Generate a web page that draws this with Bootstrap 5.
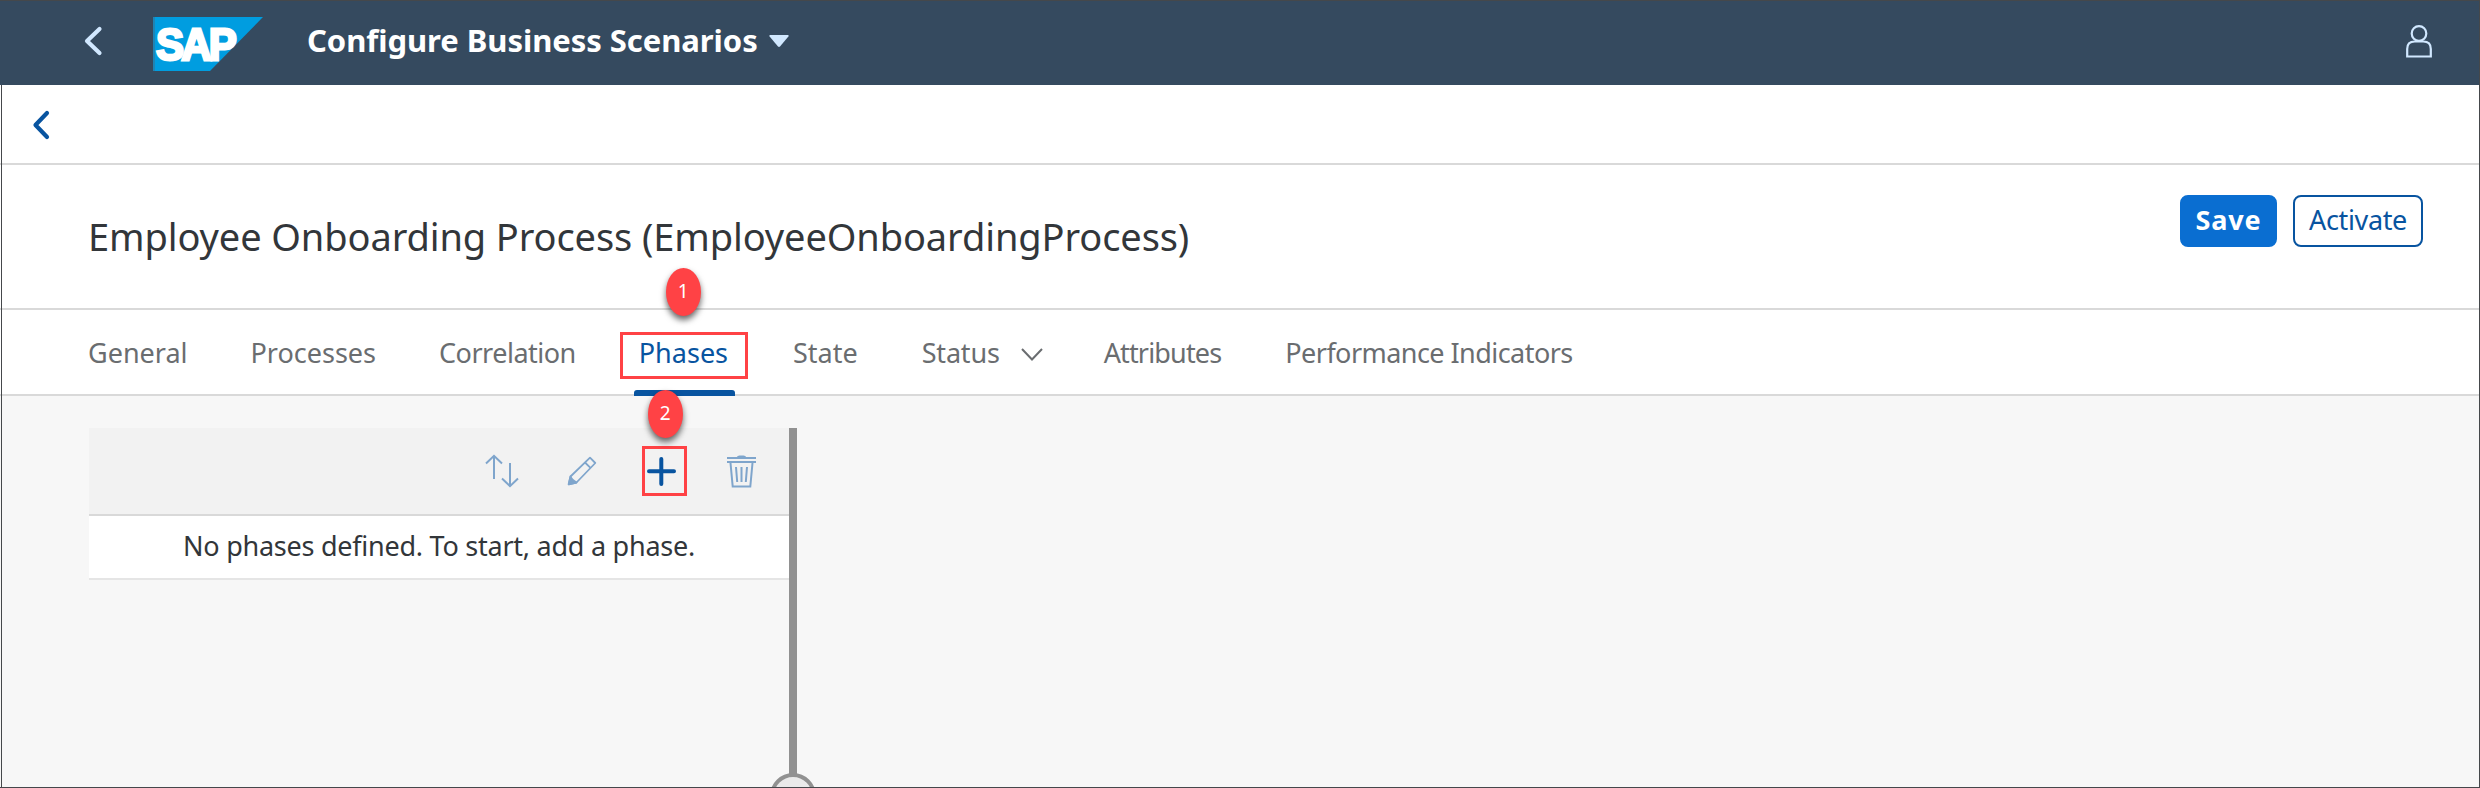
<!DOCTYPE html>
<html lang="en">
<head>
<meta charset="utf-8">
<meta name="viewport" content="width=device-width, initial-scale=1">
<title>Configure Business Scenarios</title>
<link href="https://cdn.jsdelivr.net/npm/bootstrap@5.3.0/dist/css/bootstrap.min.css" rel="stylesheet">
<style>
  body { font-family: "Noto Sans", sans-serif; font-size: 27px; line-height: 36px; color: #32363a; background: #f7f7f7; }
  .app-frame { height: 788px; border: 1px solid #45484b; border-width: 0 1px 1px 0; }
  .app-frame > .frame-left { top: 85px; bottom: 0; left: 1px; width: 1px; background: #45484b; z-index: 5; }
  svg { display: block; flex: none; }
  .shell { height: 85px; margin-right: -1px; background: #354a5f; border-top: 1px solid #45484b; padding: 0 48px 4px 83px; }
  .shell-title { font-size: 31px; font-weight: 700; color: #fff; letter-spacing: -.05px; margin: -2px 0 0 44px; }
  .back-row { height: 80px; border-bottom: 2px solid #d9d9d9; padding: 2px 0 0 32px; }
  .title-row { height: 145px; border-bottom: 2px solid #d9d9d9; padding: 0 56px 0 88px; }
  .page-title { font-size: 38px; font-weight: 400; letter-spacing: -.1px; line-height: 48px; color: #32363a; padding-bottom: 2px; }
  .action { height: 52px; margin-top: 30px; padding: 0 0 3px; border-width: 2px; border-radius: 8px; font-size: 27px; line-height: 44px; }
  .action-save { width: 97px; background: #0a6ed1; border-color: #0a6ed1; color: #fff; font-weight: 700; letter-spacing: .8px; }
  .action-activate { width: 130px; background: #fff; border-color: #0854a0; color: #0854a0; letter-spacing: -.35px; }
  .tab-row { height: 86px; border-bottom: 2px solid #d9d9d9; padding-left: 88px; gap: 64px; flex-wrap: nowrap; }
  .tab-row .nav-link { padding: 2px 0 0; color: #6a6d70; height: 84px; display: flex; align-items: center; position: relative; white-space: nowrap; }
  .tab-row .nav-link.active { color: #0854a0; }
  .tab-row .nav-link.active::after { content: ""; position: absolute; left: -5px; width: 101px; bottom: -2px; height: 6px; background: #0854a0; border-radius: 3px 3px 0 0; }
  .work { height: 391px; padding: 32px 0 0 89px; }
  .phases { width: 700px; }
  .phase-tools { height: 88px; background: #f2f2f2; border-bottom: 2px solid #d9d9d9; padding-right: 33px; }
  .phase-empty { height: 64px; background: #fff; border-bottom: 2px solid #e5e5e5; padding: 0 0 2px; letter-spacing: -.25px; }
  .splitter { width: 8px; background: #919191; }
  .grip { left: -19px; top: 345px; width: 46px; height: 46px; border: 4px solid #919191; border-radius: 50%; background: #eaeaea; }
  .callout-box { border: 3px solid #ff4245; pointer-events: none; z-index: 2; }
  .callout-dot { width: 35px; height: 48px; border-radius: 50%; background: #ff4245; color: #fff; font-size: 19px; line-height: 46px; text-align: center; letter-spacing: 0; box-shadow: 0 4px 6px rgba(0,0,0,.6); z-index: 3; }
</style>
</head>
<body>
<div class="app-frame position-relative overflow-hidden">
  <div class="frame-left position-absolute"></div>

  <header class="shell d-flex align-items-center">
    <svg width="20" height="30" viewBox="0 0 20 30" fill="none" stroke="#d1e8ff" stroke-width="4.2" stroke-linecap="round" stroke-linejoin="round"><path d="M16.500 3 4 15l12.500 12"/></svg>
    <svg width="110" height="54" viewBox="0 0 110 54" style="margin:6px 0 0 50px" role="img" aria-label="SAP">
      <path d="M0 0h110L57 54H0z" fill="#009de0"/><path d="M0 0h2v54H0z" fill="#1f84b4"/>
      <text x="3" y="42.500" textLength="78" lengthAdjust="spacingAndGlyphs" font-family="Liberation Sans, sans-serif" font-size="45" font-weight="700" letter-spacing="-3" fill="#fff" stroke="#fff" stroke-width="2.800">SAP</text>
    </svg>
    <span class="shell-title">Configure Business Scenarios</span>
    <svg width="20" height="12" viewBox="0 0 20 12" style="margin-left:11px"><path d="M1 0h18q1 .5.4 1.400L11 11.500q-1 .8-2 0L.6 1.400Q0 .5 1 0z" fill="#d1e8ff"/></svg>
    <svg class="ms-auto" width="26" height="33" viewBox="0 0 26 33" fill="none" stroke="#d1e8ff" stroke-width="2.200"><circle cx="13" cy="8.500" r="7.300"/><path d="M1.200 31.500V24q0-7.500 7.500-7.500h8.600q7.500 0 7.500 7.500v7.500z"/></svg>
  </header>

  <div class="back-row bg-white d-flex align-items-center">
    <svg width="18" height="30" viewBox="0 0 18 30" fill="none" stroke="#0854a0" stroke-width="4.200" stroke-linecap="round" stroke-linejoin="round"><path d="M15 3 3.500 15 15 27"/></svg>
  </div>

  <div class="title-row bg-white d-flex align-items-center">
    <h1 class="page-title mb-0">Employee Onboarding Process (EmployeeOnboardingProcess)</h1>
    <div class="ms-auto d-flex gap-3 align-self-start">
      <button class="btn action action-save">Save</button>
      <button class="btn action action-activate">Activate</button>
    </div>
  </div>

  <nav class="nav tab-row bg-white position-relative">
    <a class="nav-link">General</a>
    <a class="nav-link" style="margin-left:-1px">Processes</a>
    <a class="nav-link" style="letter-spacing:-.5px;margin-left:-1px">Correlation</a>
    <a class="nav-link active" style="margin-left:-1px">Phases
      <span class="callout-box position-absolute" style="left:-19px;top:22px;width:128px;height:47px"></span>
      <span class="callout-dot position-absolute" style="left:27px;top:-42px">1</span>
      <span class="callout-dot position-absolute" style="left:9px;top:80px">2</span>
    </a>
    <a class="nav-link" style="margin-left:1px">State</a>
    <a class="nav-link" style="letter-spacing:-.2px">Status
      <svg width="22" height="13" viewBox="0 0 22 13" style="margin:3px 0 0 21px" fill="none" stroke="#6a6d70" stroke-width="2"><path d="m1 1 10 10.500L21 1"/></svg>
    </a>
    <a class="nav-link" style="letter-spacing:-.84px;margin-left:-3px">Attributes</a>
    <a class="nav-link" style="letter-spacing:-.55px">Performance Indicators</a>
  </nav>

  <main class="work d-flex">
    <section class="phases">
      <div class="phase-tools d-flex align-items-center justify-content-end">
        <svg width="34" height="34" viewBox="0 0 34 34" fill="none" stroke="#7fa5cc" stroke-width="2"><path d="M9 25V2M1 9.500 9 1.800l8 7.700M25 9v23M17 24.500l8 7.700 8-7.700"/></svg>
        <svg width="30" height="30" viewBox="0 0 30 30" style="margin-left:48px" fill="none" stroke="#7fa5cc" stroke-width="1.800" stroke-linejoin="round"><path d="M3.500 20.500 23 1.700 28.300 7 9.500 26.500 1.700 28.300zM18 6.500l5.500 5.300"/><path d="M3.500 20.500q1 3 6 6l-7.800 1.800z" fill="#7fa5cc"/></svg>
        <span class="position-relative" style="margin-left:50px">
          <svg width="29" height="29" viewBox="0 0 29 29" fill="none" stroke="#0854a0" stroke-width="4" stroke-linecap="round"><path d="M14.300 2v25M2 14.300h25"/></svg>
          <span class="callout-box position-absolute" style="left:-5px;top:-11px;width:45px;height:50px"></span>
        </span>
        <svg width="29" height="33" viewBox="0 0 29 33" style="margin-left:51px" fill="none" stroke="#7fa5cc" stroke-width="2"><path d="M0 3h29M0 7h29M3.500 8l2.200 23.500h17.600L25.500 8M9 12l1.200 15M14.500 12v15M20 12l-1.200 15"/><path d="M9.500 2.500q1-2 3-2h4q2 0 3 2z" fill="#7fa5cc" stroke="none"/></svg>
      </div>
      <div class="phase-empty d-flex align-items-center justify-content-center">No phases defined. To start, add a phase.</div>
    </section>
    <div class="splitter position-relative"><span class="grip position-absolute"></span></div>
  </main>
</div>
<script src="https://cdn.jsdelivr.net/npm/bootstrap@5.3.0/dist/js/bootstrap.bundle.min.js"></script>
</body>
</html>
